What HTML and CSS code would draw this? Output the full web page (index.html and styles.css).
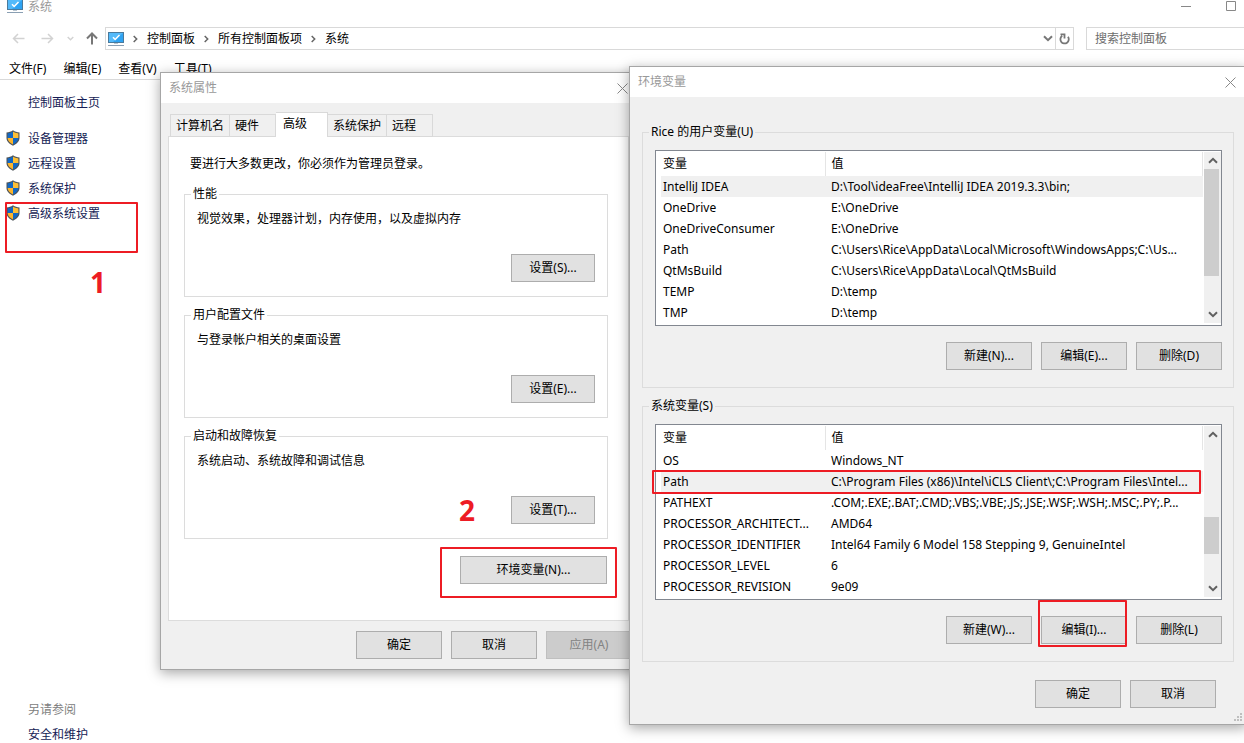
FILE: index.html
```html
<!DOCTYPE html>
<html lang="zh-CN">

<head>
	<meta charset="UTF-8" />
	<meta name="viewport" content="width=device-width, initial-scale=1.0" />
	<title>系统</title>
	<link rel="stylesheet" href="styles.css">
</head>

<body>
	<!-- shared icons -->
	<svg class="defs" width="0" height="0">
		<symbol id="pc" viewBox="0 0 16 16">
			<rect x="0" y="1" width="16" height="11" fill="#4a7a9c" />
			<rect x="1" y="2" width="14" height="9" fill="#2fa3f2" />
			<path d="M1 2h14L5 11H1z" fill="#54bafa" />
			<path d="M5 6.200l2.200 2.300L11.500 4" fill="none" stroke="#fff" stroke-width="1.500" />
			<rect x="6" y="12" width="4" height="1" fill="#b9c6d2" />
			<rect x="0" y="14" width="16" height="1" fill="#8a9fb3" />
		</symbol>
		<symbol id="shield" viewBox="0 0 14 16">
			<path d="M7 .3C5 1.800 3 2.300.5 2.500V8c0 3.500 3 6 6.500 7.700C10.500 14 13.500 11.500 13.500 8V2.500C11 2.300 9 1.800 7 .3z" fill="#4d5358" />
			<path d="M7 1.600C5.500 2.700 4 3.200 1.600 3.400V8H7z" fill="#1268c4" />
			<path d="M7 1.600C8.500 2.700 10 3.200 12.400 3.400V8H7z" fill="#fdbf35" />
			<path d="M1.600 8H7v6.500C4 13 1.700 10.900 1.600 8z" fill="#fdb52b" />
			<path d="M12.400 8H7v6.500C10 13 12.300 10.900 12.400 8z" fill="#1268c4" />
		</symbol>
		<symbol id="close" viewBox="0 0 11 11">
			<path d="M.5.5l10 10M10.500.5l-10 10" fill="none" stroke="#888" />
		</symbol>
		<symbol id="next" viewBox="0 0 5 8">
			<path d="M.7 1l3 3-3 3" fill="none" stroke="#666" stroke-width="1.500" />
		</symbol>
		<symbol id="down" viewBox="0 0 10 7">
			<path d="M1 1.200l4 4 4-4" fill="none" stroke="currentColor" stroke-width="2" />
		</symbol>
		<symbol id="up" viewBox="0 0 10 7">
			<path d="M1 5.800l4-4 4 4" fill="none" stroke="currentColor" stroke-width="2" />
		</symbol>
	</svg>

	<!-- control panel window -->
	<div class="explorer">
		<div class="caption">
			<svg width="16" height="14" viewBox="0 2 16 14"><use href="#pc" width="16" height="16" /></svg>
			<span class="caption-text">系统</span>
			<button class="icon-btn" aria-label="最小化"><svg width="11" height="11"><path d="M0 5.500h10" stroke="#888" /></svg></button>
			<button class="icon-btn" aria-label="最大化"><svg width="11" height="11"><path d="M.5.5h9v9h-9z" fill="none" stroke="#888" /></svg></button>
		</div>

		<div class="address-row">
			<div class="nav">
				<button class="icon-btn" aria-label="后退"><svg width="13" height="11"><path d="M12.500 5.500H1.500M6 1L1.500 5.500 6 10" fill="none" stroke="#d2d2d2" stroke-width="1.500" /></svg></button>
				<button class="icon-btn forward" aria-label="前进"><svg width="13" height="11"><path d="M.5 5.500h11M7 1l4.500 4.500L7 10" fill="none" stroke="#d2d2d2" stroke-width="1.500" /></svg></button>
				<button class="icon-btn recent" aria-label="最近"><svg width="7" height="5"><use href="#down" width="7" height="5" /></svg></button>
				<button class="icon-btn" aria-label="向上"><svg width="12" height="13"><path d="M6 12.500V2M1 6.500l5-5 5 5" fill="none" stroke="#777" stroke-width="2" /></svg></button>
			</div>
			<div class="address">
				<svg width="16" height="16"><use href="#pc" /></svg>
				<svg width="5" height="8"><use href="#next" /></svg>
				<a href="#">控制面板</a>
				<svg width="5" height="8"><use href="#next" /></svg>
				<a href="#">所有控制面板项</a>
				<svg width="5" height="8"><use href="#next" /></svg>
				<a href="#">系统</a>
				<button class="icon-btn address-drop" aria-label="历史记录"><svg width="10" height="7"><use href="#down" /></svg></button>
				<button class="icon-btn refresh" aria-label="刷新"><svg width="11" height="12"><path d="M3.200 2.800A4.200 4.200 0 1 0 9 3.800M1.500 1.400h4V5.500" fill="none" stroke="#777" stroke-width="1.800" /></svg></button>
			</div>
			<input class="search" type="text" placeholder="搜索控制面板" aria-label="搜索控制面板">
		</div>

		<div class="menubar">
			<button>文件(F)</button>
			<button>编辑(E)</button>
			<button>查看(V)</button>
			<button>工具(T)</button>
		</div>

		<div class="sidebar">
			<a href="#" class="home">控制面板主页</a>
			<a href="#"><svg width="14" height="16"><use href="#shield" /></svg>设备管理器</a>
			<a href="#"><svg width="14" height="16"><use href="#shield" /></svg>远程设置</a>
			<a href="#"><svg width="14" height="16"><use href="#shield" /></svg>系统保护</a>
			<a href="#"><svg width="14" height="16"><use href="#shield" /></svg>高级系统设置</a>
			<div class="see-also">另请参阅</div>
			<a href="#" class="plain">安全和维护</a>
		</div>
	</div>

	<!-- system properties -->
	<div class="dialog props" role="dialog" aria-label="系统属性">
		<div class="dialog-title">
			<span>系统属性</span>
			<button class="icon-btn" aria-label="关闭"><svg width="11" height="11"><use href="#close" /></svg></button>
		</div>
		<div class="tabs" role="tablist">
			<button class="tab" role="tab">计算机名</button>
			<button class="tab" role="tab">硬件</button>
			<button class="tab active" role="tab" aria-selected="true">高级</button>
			<button class="tab" role="tab">系统保护</button>
			<button class="tab" role="tab">远程</button>
		</div>
		<div class="tab-panel" role="tabpanel">
			<p class="intro">要进行大多数更改，你必须作为管理员登录。</p>
			<fieldset class="group">
				<legend>性能</legend>
				<p>视觉效果，处理器计划，内存使用，以及虚拟内存</p>
				<button class="btn">设置(S)...</button>
			</fieldset>
			<fieldset class="group">
				<legend>用户配置文件</legend>
				<p>与登录帐户相关的桌面设置</p>
				<button class="btn">设置(E)...</button>
			</fieldset>
			<fieldset class="group">
				<legend>启动和故障恢复</legend>
				<p>系统启动、系统故障和调试信息</p>
				<button class="btn">设置(T)...</button>
			</fieldset>
			<button class="btn btn-env">环境变量(N)...</button>
		</div>
		<div class="btn-row">
			<button class="btn">确定</button>
			<button class="btn">取消</button>
			<button class="btn" disabled>应用(A)</button>
		</div>
	</div>

	<!-- environment variables -->
	<div class="dialog env" role="dialog" aria-label="环境变量">
		<div class="dialog-title">
			<span>环境变量</span>
			<button class="icon-btn" aria-label="关闭"><svg width="11" height="11"><use href="#close" /></svg></button>
		</div>
		<div class="env-body">
			<fieldset class="vars">
				<legend>Rice 的用户变量(U)</legend>
				<div class="list">
					<table>
						<thead>
							<tr><th class="name">变量</th><th>值</th></tr>
						</thead>
						<tbody>
							<tr class="selected"><td>IntelliJ IDEA</td><td>D:\Tool\ideaFree\IntelliJ IDEA 2019.3.3\bin;</td></tr>
							<tr><td>OneDrive</td><td>E:\OneDrive</td></tr>
							<tr><td>OneDriveConsumer</td><td>E:\OneDrive</td></tr>
							<tr><td>Path</td><td>C:\Users\Rice\AppData\Local\Microsoft\WindowsApps;C:\Us...</td></tr>
							<tr><td>QtMsBuild</td><td>C:\Users\Rice\AppData\Local\QtMsBuild</td></tr>
							<tr><td>TEMP</td><td>D:\temp</td></tr>
							<tr><td>TMP</td><td>D:\temp</td></tr>
						</tbody>
					</table>
					<div class="scroll">
						<button class="icon-btn" aria-label="向上滚动"><svg width="10" height="7"><use href="#up" /></svg></button>
						<div class="track"><div class="thumb thumb-top"></div></div>
						<button class="icon-btn" aria-label="向下滚动"><svg width="10" height="7"><use href="#down" /></svg></button>
					</div>
				</div>
				<div class="btn-row">
					<button class="btn">新建(N)...</button>
					<button class="btn">编辑(E)...</button>
					<button class="btn">删除(D)</button>
				</div>
			</fieldset>
			<fieldset class="vars">
				<legend>系统变量(S)</legend>
				<div class="list">
					<table>
						<thead>
							<tr><th class="name">变量</th><th>值</th></tr>
						</thead>
						<tbody>
							<tr><td>OS</td><td>Windows_NT</td></tr>
							<tr class="selected"><td>Path</td><td>C:\Program Files (x86)\Intel\iCLS Client\;C:\Program Files\Intel...</td></tr>
							<tr><td>PATHEXT</td><td>.COM;.EXE;.BAT;.CMD;.VBS;.VBE;.JS;.JSE;.WSF;.WSH;.MSC;.PY;.P...</td></tr>
							<tr><td>PROCESSOR_ARCHITECT...</td><td>AMD64</td></tr>
							<tr><td>PROCESSOR_IDENTIFIER</td><td>Intel64 Family 6 Model 158 Stepping 9, GenuineIntel</td></tr>
							<tr><td>PROCESSOR_LEVEL</td><td>6</td></tr>
							<tr><td>PROCESSOR_REVISION</td><td>9e09</td></tr>
						</tbody>
					</table>
					<div class="scroll">
						<button class="icon-btn" aria-label="向上滚动"><svg width="10" height="7"><use href="#up" /></svg></button>
						<div class="track"><div class="thumb thumb-low"></div></div>
						<button class="icon-btn" aria-label="向下滚动"><svg width="10" height="7"><use href="#down" /></svg></button>
					</div>
				</div>
				<div class="btn-row">
					<button class="btn">新建(W)...</button>
					<button class="btn">编辑(I)...</button>
					<button class="btn">删除(L)</button>
				</div>
			</fieldset>
			<div class="btn-row env-footer">
				<button class="btn">确定</button>
				<button class="btn">取消</button>
			</div>
		</div>
		<svg class="grip" width="9" height="9" fill="#bfbfbf"><path d="M6 0h2v2H6zM3 3h2v2H3zM6 3h2v2H6zM0 6h2v2H0zM3 6h2v2H3zM6 6h2v2H6z" /></svg>
	</div>

	<!-- red marks over the windows -->
	<div class="mark mark-settings"></div>
	<div class="mark mark-env"></div>
	<div class="mark mark-path"></div>
	<div class="mark mark-edit"></div>
	<div class="step step-1">1</div>
	<div class="step step-2">2</div>
</body>

</html>
```
FILE: styles.css
```css
* {
	box-sizing: border-box;
}

body {
	position: relative;
	height: 100vh;
	margin: 0;
	overflow: hidden;
	background: #fff;
	color: #000;
	font-family: "Noto Sans", "Noto Sans CJK SC", sans-serif;
	font-size: 12px;
	line-height: 16px;
}

p {
	margin: 0;
}

a {
	color: inherit;
	text-decoration: none;
}

button,
input {
	font: inherit;
	color: inherit;
}

svg {
	display: block;
	flex: none;
}

.defs {
	position: absolute;
}

.icon-btn {
	display: flex;
	align-items: center;
	justify-content: center;
	padding: 0;
	border: none;
	background: none;
}

/* control panel window */
.explorer {
	display: flex;
	flex-direction: column;
	height: 100%;
}

.caption {
	display: flex;
	align-items: flex-start;
	height: 27px;
	padding: 0 7px;
}

.caption-text {
	flex: 1;
	margin-left: 5px;
	line-height: 14px;
	color: #999;
}

.caption .icon-btn {
	margin: 1px 0 0 34px;
}

.address-row {
	display: flex;
	height: 23px;
}

.nav {
	display: flex;
	align-items: center;
	justify-content: space-between;
	width: 105px;
	padding: 0 7px 0 12px;
}

.forward {
	margin-left: 4px;
}

.recent {
	color: #d2d2d2;
}

.address {
	display: flex;
	flex: 1;
	align-items: center;
	gap: 9px;
	padding-left: 2px;
	border: 1px solid #d9d9d9;
}

.address-drop {
	margin-left: auto;
	color: #777;
}

.address-drop + .refresh {
	width: 18px;
	height: 100%;
	margin-left: -7px;
	border-left: 1px solid #d9d9d9;
}

.search {
	width: 160px;
	margin: 0 -2px 0 12px;
	padding: 0 8px;
	border: 1px solid #d9d9d9;
	outline: none;
}

.search::placeholder {
	color: #6d6d6d;
}

.menubar {
	display: flex;
	gap: 17px;
	padding: 11px 9px 2px;
	border-bottom: 1px solid #d9d9d9;
}

.menubar button {
	padding: 0;
	border: none;
	background: none;
}

.sidebar {
	display: flex;
	flex: 1;
	flex-direction: column;
	align-items: flex-start;
	gap: 9px;
	padding: 15px 6px 0;
	color: #151c55;
}

.sidebar a {
	display: flex;
	gap: 8px;
}

.sidebar a svg {
	margin-top: -1px;
}

.sidebar .home {
	margin: 0 0 11px 22px;
}

.sidebar .plain {
	margin-left: 22px;
}

.see-also {
	margin: auto 0 0 22px;
	color: #808080;
}

/* dialogs */
.dialog {
	position: absolute;
	border: 1px solid #a6a6a6;
	background: #f0f0f0;
	box-shadow: 0 3px 12px rgba(0, 0, 0, 0.35);
}

.props {
	left: 160px;
	top: 72px;
	width: 477px;
}

.env {
	left: 629px;
	right: -3px;
	top: 66px;
}

.dialog-title {
	display: flex;
	align-items: center;
	justify-content: space-between;
	height: 30px;
	padding: 0 8px;
	background: #fff;
	color: #999;
}

.env .dialog-title {
	padding-right: 10px;
}

.btn {
	min-width: 86px;
	height: 28px;
	padding: 0 8px;
	border: 1px solid #adadad;
	background: #e1e1e1;
}

.btn:disabled {
	border-color: #bfbfbf;
	background: #ccc;
	color: #838383;
}

.btn-row {
	display: flex;
	justify-content: flex-end;
	gap: 9px;
}

/* system properties */
.tabs {
	display: flex;
	align-items: flex-end;
	margin: 9px 9px -1px;
}

.tab {
	min-width: 46px;
	height: 23px;
	padding: 0 5px;
	border: 1px solid #d9d9d9;
	border-left: none;
	background: #f0f0f0;
	text-align: left;
}

.tab:first-child {
	border-left: 1px solid #d9d9d9;
}

.tab.active {
	width: 52px;
	height: 25px;
	padding: 0 7px 3px;
	border-bottom: none;
	background: #fff;
}

.tab-panel {
	display: flex;
	flex-direction: column;
	margin: 0 7px;
	padding: 19px 20px 36px 15px;
	border: 1px solid #dcdcdc;
	background: #fff;
}

.intro {
	margin: 0 0 14px 6px;
}

fieldset {
	min-width: 0;
	margin: 0 0 10px;
	border: 1px solid #dcdcdc;
}

legend {
	padding: 0 2px;
}

.group {
	padding: 9px 12px 14px;
}

.group legend {
	margin-left: -6px;
}

.group .btn {
	display: block;
	min-width: 84px;
	margin: 27px 0 0 auto;
}

.btn-env {
	width: 147px;
	margin: 7px 1px 0 auto;
}

.props > .btn-row {
	padding: 10px 4px;
}

/* environment variables */
.env-body {
	padding: 27px 12px 16px;
}

.vars {
	padding: 10px 11px 17px 12px;
}

.vars legend {
	margin-left: -6px;
}

.vars .btn-row {
	margin-top: 16px;
}

.list {
	display: flex;
	padding: 1px 0 2px 5px;
	border: 1px solid #828790;
	background: #fff;
}

.list table {
	flex: 1;
	min-width: 0;
	table-layout: fixed;
	border-collapse: collapse;
}

.list th,
.list td {
	height: 21px;
	padding: 0 0 0 6px;
	overflow: hidden;
	font-weight: normal;
	text-align: left;
	white-space: nowrap;
}

.list th {
	height: 24px;
	border-right: 1px solid #e5e5e5;
}

.list .name {
	width: 164px;
}

.list th:first-child,
.list td:first-child {
	padding-left: 2px;
}

.selected {
	background: #f0f0f0;
}

.scroll {
	display: flex;
	flex-direction: column;
	width: 17px;
	margin-left: 1px;
	background: #f0f0f0;
	color: #606060;
}

.scroll .icon-btn {
	height: 17px;
}

.track {
	flex: 1;
}

.thumb {
	width: 15px;
	background: #cdcdcd;
}

.thumb-top {
	height: 107px;
}

.thumb-low {
	height: 37px;
	margin-top: 74px;
}

.env-footer {
	padding: 8px 18px 0 0;
}

.grip {
	position: absolute;
	right: 3px;
	bottom: 2px;
}

/* red marks */
.mark {
	position: absolute;
	border: 2px solid #ed1c24;
	border-radius: 1px;
}

.mark-settings {
	left: 5px;
	top: 202px;
	width: 133px;
	height: 51px;
}

.mark-env {
	left: 440px;
	top: 547px;
	width: 177px;
	height: 51px;
}

.mark-path {
	left: 652px;
	top: 470px;
	width: 549px;
	height: 24px;
}

.mark-edit {
	left: 1038px;
	top: 600px;
	width: 89px;
	height: 47px;
}

.step {
	position: absolute;
	color: #ed1c24;
	font-size: 28px;
	font-weight: bold;
	line-height: 32px;
}

.step-1 {
	left: 90px;
	top: 266px;
}

.step-2 {
	left: 459px;
	top: 494px;
}
```
